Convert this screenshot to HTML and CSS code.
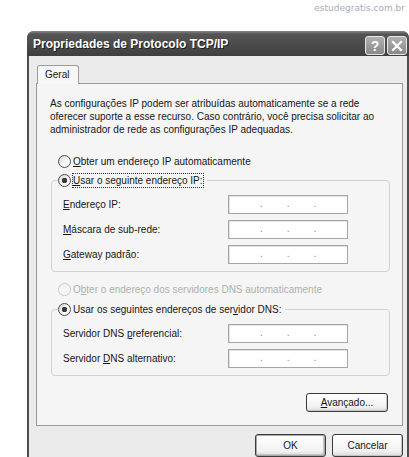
FILE: index.html
```html
<!DOCTYPE html>
<html lang="pt-BR">
<head>
    <meta charset="UTF-8">
    <meta name="viewport" content="width=device-width, initial-scale=1.0">
    <title>Propriedades de Protocolo TCP/IP</title>
    <link rel="stylesheet" href="styles.css">
</head>
<body>
    <div class="watermark">estudegratis.com.br</div>
    <div class="window">
        <div class="titlebar">
            <span class="title">Propriedades de Protocolo TCP/IP</span>
            <div class="caption-buttons">
                <span class="caption-btn">?</span>
                <span class="caption-btn">
                    <svg width="12" height="12" viewBox="0 0 12 12"><path d="M2 2L10 10M10 2L2 10" stroke="#fff" stroke-width="2.2" stroke-linecap="square"/></svg>
                </span>
            </div>
        </div>
        <div class="client">
            <div class="tab">Geral</div>
            <div class="panel">
                <p class="intro">As configurações IP podem ser atribuídas automaticamente se a rede<br>oferecer suporte a esse recurso. Caso contrário, você precisa solicitar ao<br>administrador de rede as configurações IP adequadas.</p>

                <div class="radio first"><span class="circle"></span><span><u>O</u>bter um endereço IP automaticamente</span></div>

                <div class="group">
                    <div class="radio legend"><span class="circle checked"></span><span class="focus"><u>U</u>sar o seguinte endereço IP:</span></div>
                    <div class="fields">
                        <span><u>E</u>ndereço IP:</span>
                        <div class="ip"><span>.</span><span>.</span><span>.</span></div>
                        <span><u>M</u>áscara de sub-rede:</span>
                        <div class="ip"><span>.</span><span>.</span><span>.</span></div>
                        <span><u>G</u>ateway padrão:</span>
                        <div class="ip"><span>.</span><span>.</span><span>.</span></div>
                    </div>
                </div>

                <div class="radio disabled"><span class="circle"></span><span>O<u>b</u>ter o endereço dos servidores DNS automaticamente</span></div>

                <div class="group dns">
                    <div class="radio legend"><span class="circle checked"></span><span>Usar os seguintes endereços de ser<u>v</u>idor DNS:</span></div>
                    <div class="fields">
                        <span>Servidor DNS <u>p</u>referencial:</span>
                        <div class="ip"><span>.</span><span>.</span><span>.</span></div>
                        <span>Servidor <u>D</u>NS alternativo:</span>
                        <div class="ip"><span>.</span><span>.</span><span>.</span></div>
                    </div>
                </div>

                <div class="advanced">
                    <button class="btn wide"><u>A</u>vançado...</button>
                </div>
            </div>
            <div class="actions">
                <button class="btn default">OK</button>
                <button class="btn">Cancelar</button>
            </div>
        </div>
    </div>
</body>
</html>
```

FILE: styles.css
```css
body {
    margin: 0;
    height: 457px;
    overflow: hidden;
    background-color: #fff;
    font-family: "Liberation Sans", Arial, sans-serif;
    font-size: 10px;
    color: #161616;
}
.watermark {
    height: 31px;
    line-height: 17px;
    padding-right: 4px;
    text-align: right;
    font-family: "DejaVu Sans", Verdana, sans-serif;
    font-size: 9px;
    color: #a9abbb;
}
.window {
    margin-left: 27px;
    width: 382px;
    height: 426px;
    display: flex;
    flex-direction: column;
    background-color: #4e4e4e;
    border-radius: 7px 7px 0 0;
}
.titlebar {
    height: 26px;
    display: flex;
    align-items: center;
    justify-content: space-between;
    padding: 0 2px 0 6px;
    background: linear-gradient(#8a8a8a, #555 3px, #4a4a4a 60%, #3f3f3f);
    border-radius: 7px 7px 0 0;
}
.title {
    color: #fff;
    font-weight: bold;
    font-size: 12px;
    text-shadow: 1px 1px #1e1e1e;
}
.caption-buttons {
    display: flex;
    gap: 2px;
    align-self: flex-end;
    margin-bottom: 1px;
}
.caption-btn {
    width: 20px;
    height: 19px;
    box-sizing: border-box;
    display: flex;
    align-items: center;
    justify-content: center;
    border: 1px solid #e6e6e6;
    border-radius: 3px;
    background: linear-gradient(#b0b0b0, #8a8a8a);
    color: #fff;
    font-weight: bold;
    font-size: 14px;
}
.client {
    flex: 1;
    margin: 0 2px;
    padding: 9px 4px 0 7px;
    background-color: #ebebeb;
}
.tab {
    position: relative;
    z-index: 1;
    margin: 0 0 -1px 1px;
    width: 42px;
    height: 19px;
    box-sizing: border-box;
    padding-left: 7px;
    line-height: 18px;
    border: 1px solid #9a9a9a;
    border-bottom: none;
    border-radius: 3px 3px 0 0;
    background-color: #f7f7f7;
}
.panel {
    height: 343px;
    box-sizing: border-box;
    padding: 13px 12px 0 13px;
    border: 1px solid #9a9a9a;
    background-color: #f5f5f5;
}
.intro {
    margin: 0;
    line-height: 13px;
}
.radio {
    display: flex;
    align-items: center;
    gap: 2px;
    height: 13px;
    line-height: 13px;
    margin-left: 8px;
}
.radio.first {
    margin-top: 19px;
}
.radio.disabled {
    margin-top: 11px;
    color: #b0b0b0;
}
.circle {
    width: 13px;
    height: 13px;
    box-sizing: border-box;
    border: 1px solid #4a4a4a;
    border-radius: 50%;
    background: linear-gradient(135deg, #d6d6d6, #fff 70%);
}
.circle.checked {
    background: radial-gradient(circle, #3a3a3a 0 2.5px, transparent 3px), linear-gradient(135deg, #d6d6d6, #fff 70%);
}
.disabled .circle {
    border-color: #c8c8c8;
    background: #f5f5f5;
}
.focus {
    outline: 1px dotted #333;
    outline-offset: 0;
}
.group {
    margin: 12px 0 0 1px;
    padding: 0 0 7px 11px;
    border: 1px solid #d2d2d2;
    border-radius: 4px;
}
.group.dns {
    margin-top: 13px;
}
.legend {
    margin: -7px 0 8px -5px;
    width: fit-content;
    padding-right: 4px;
    background-color: #f5f5f5;
}
.fields {
    display: grid;
    grid-template-columns: 165px 120px;
    row-gap: 6px;
    align-items: center;
}
.ip {
    height: 19px;
    box-sizing: border-box;
    display: flex;
    align-items: flex-end;
    gap: 24px;
    padding: 0 0 4px 31px;
    border: 1px solid #a6a6a6;
    box-shadow: inset 1px 1px #e2e2e2;
    background-color: #fff;
    color: #888;
    line-height: 10px;
}
.advanced {
    display: flex;
    justify-content: flex-end;
    margin: 17px 2px 0 0;
}
.btn {
    height: 19px;
    padding: 0;
    font-family: "Liberation Sans", Arial, sans-serif;
    font-size: 10px;
    color: #161616;
    border: 1px solid #3c3c3c;
    border-radius: 3px;
    background: linear-gradient(#fff, #f2f2f2 75%, #dadada);
    box-shadow: inset -1px -1px #c4c4c4;
}
.btn.wide {
    width: 82px;
}
.actions {
    display: flex;
    justify-content: flex-end;
    gap: 6px;
    margin-top: 8px;
}
.actions .btn {
    width: 71px;
    height: 23px;
}
.btn.default {
    box-shadow: inset 0 0 0 1px #a8a8a8, inset -2px -2px #c4c4c4;
}
```
